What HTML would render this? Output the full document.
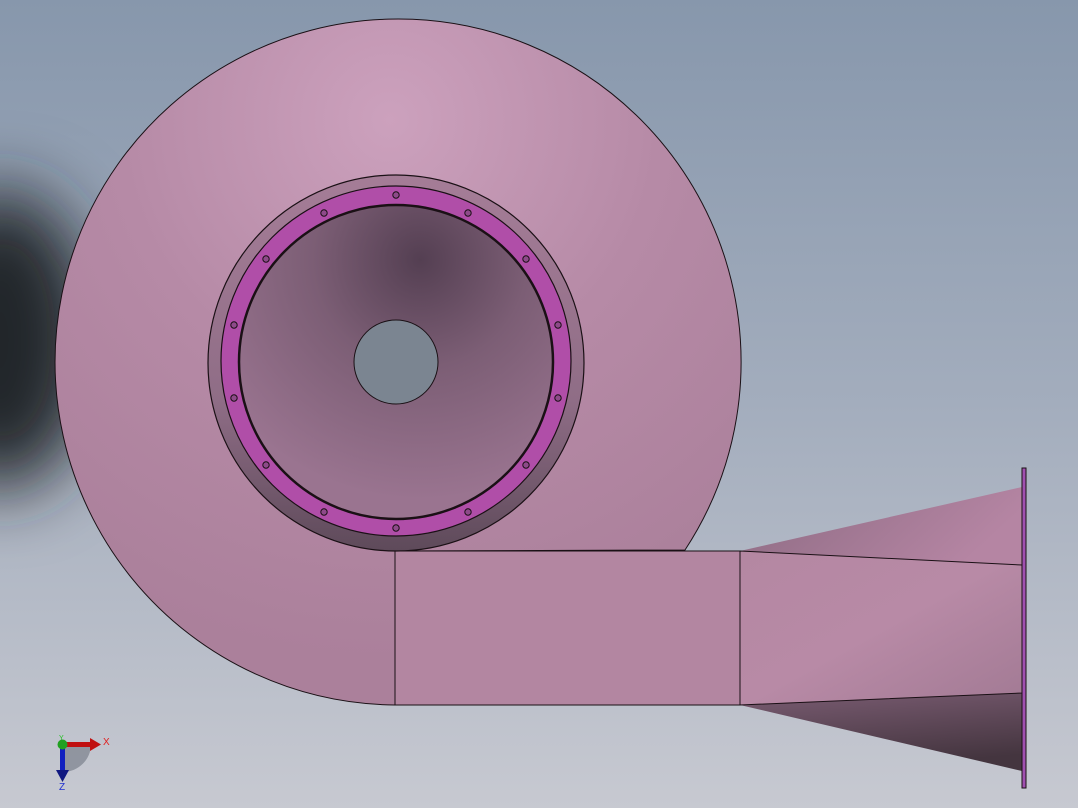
<!DOCTYPE html>
<html><head><style>html,body{margin:0;padding:0;width:1078px;height:808px;overflow:hidden}</style></head>
<body>
<svg width="1078" height="808" viewBox="0 0 1078 808" xmlns="http://www.w3.org/2000/svg">
<defs>
<linearGradient id="bg" x1="0" y1="0" x2="0" y2="1">
<stop offset="0" stop-color="#8797ac"/><stop offset="0.5" stop-color="#a3adbd"/><stop offset="1" stop-color="#c7c9d1"/></linearGradient>
<filter id="blur" x="-100%" y="-100%" width="300%" height="300%"><feGaussianBlur stdDeviation="35"/></filter>
<radialGradient id="vol" cx="390" cy="120" r="540" gradientUnits="userSpaceOnUse">
<stop offset="0" stop-color="#cca1bd"/><stop offset="0.5" stop-color="#b68aa6"/><stop offset="1" stop-color="#ab809b"/></radialGradient>
<linearGradient id="col" x1="0" y1="0" x2="0" y2="1">
<stop offset="0" stop-color="#a57d97"/><stop offset="0.6" stop-color="#8f6d86"/><stop offset="1" stop-color="#5e4a5a"/></linearGradient>
<radialGradient id="cone" cx="420" cy="260" r="240" gradientUnits="userSpaceOnUse">
<stop offset="0" stop-color="#543f52"/><stop offset="0.45" stop-color="#7c5e75"/><stop offset="1" stop-color="#9a7490"/></radialGradient>
<linearGradient id="dtop" x1="0" y1="0" x2="1" y2="0.3">
<stop offset="0" stop-color="#8c6a82"/><stop offset="1" stop-color="#b585a3"/></linearGradient>
<linearGradient id="dbot" x1="0" y1="0" x2="0.3" y2="1">
<stop offset="0" stop-color="#7a5c72"/><stop offset="1" stop-color="#44353f"/></linearGradient>
<linearGradient id="dmid" x1="0" y1="0" x2="1" y2="1">
<stop offset="0" stop-color="#b487a2"/><stop offset="0.5" stop-color="#b88aa6"/><stop offset="1" stop-color="#a27a94"/></linearGradient>
</defs>
<rect width="1078" height="808" fill="url(#bg)"/>
<ellipse cx="0" cy="340" rx="95" ry="150" fill="#23272b" filter="url(#blur)"/>
<path d="M685,550 A343,343 0 1 0 395,705 L395,551 Z" fill="url(#vol)" stroke="#1a1015" stroke-width="1"/>
<rect x="395" y="551" width="345" height="154" fill="#b386a1" stroke="#1a1015" stroke-width="1"/>
<polygon points="740,551 1022,487 1022,565" fill="url(#dtop)"/>
<polygon points="740,705 1022,693 1022,771" fill="url(#dbot)"/>
<polygon points="740,551 1022,565 1022,693 740,705" fill="url(#dmid)" stroke="#1a1015" stroke-width="1"/>
<rect x="1022" y="468" width="4" height="320" fill="#a050b0" stroke="#1a1015" stroke-width="1"/>
<circle cx="396" cy="363" r="188" fill="url(#col)" stroke="#1a1015" stroke-width="1.2"/>
<circle cx="396" cy="361" r="175" fill="#b04ea8" stroke="#1a1015" stroke-width="1.2"/>
<circle cx="396" cy="362" r="157" fill="url(#cone)" stroke="#1a1015" stroke-width="2.5"/>
<circle cx="396" cy="362" r="42" fill="#7b8591" stroke="#1a1015" stroke-width="1"/>
<g fill="#8e4a8a" stroke="#1a1015" stroke-width="1">
<circle cx="396" cy="195" r="3.2"/><circle cx="468" cy="213" r="3.2"/><circle cx="526" cy="259" r="3.2"/><circle cx="558" cy="325" r="3.2"/>
<circle cx="558" cy="398" r="3.2"/><circle cx="526" cy="465" r="3.2"/><circle cx="468" cy="512" r="3.2"/><circle cx="396" cy="528" r="3.2"/>
<circle cx="324" cy="512" r="3.2"/><circle cx="266" cy="465" r="3.2"/><circle cx="234" cy="398" r="3.2"/><circle cx="234" cy="325" r="3.2"/>
<circle cx="266" cy="259" r="3.2"/><circle cx="324" cy="213" r="3.2"/>
</g>
<path d="M63,744 L63,772 A28,28 0 0 0 91,744 Z" fill="#6e7580" opacity="0.6"/>
<rect x="61" y="742" width="30" height="5" fill="#c01010"/><polygon points="90,738 101,744.5 90,751" fill="#c01010"/>
<rect x="60" y="744" width="5" height="28" fill="#1020c0"/><polygon points="56,770 62.5,782 69,770" fill="#101880"/>
<circle cx="62.5" cy="744.5" r="5" fill="#20a020"/>
<text x="103" y="745" font-family="Liberation Sans,sans-serif" font-size="10" fill="#e02020">X</text>
<text x="59" y="790" font-family="Liberation Sans,sans-serif" font-size="10" fill="#2030d0">Z</text>
<text x="59" y="740" font-family="Liberation Sans,sans-serif" font-size="7" fill="#20c020">Y</text>
</svg>
</body></html>
